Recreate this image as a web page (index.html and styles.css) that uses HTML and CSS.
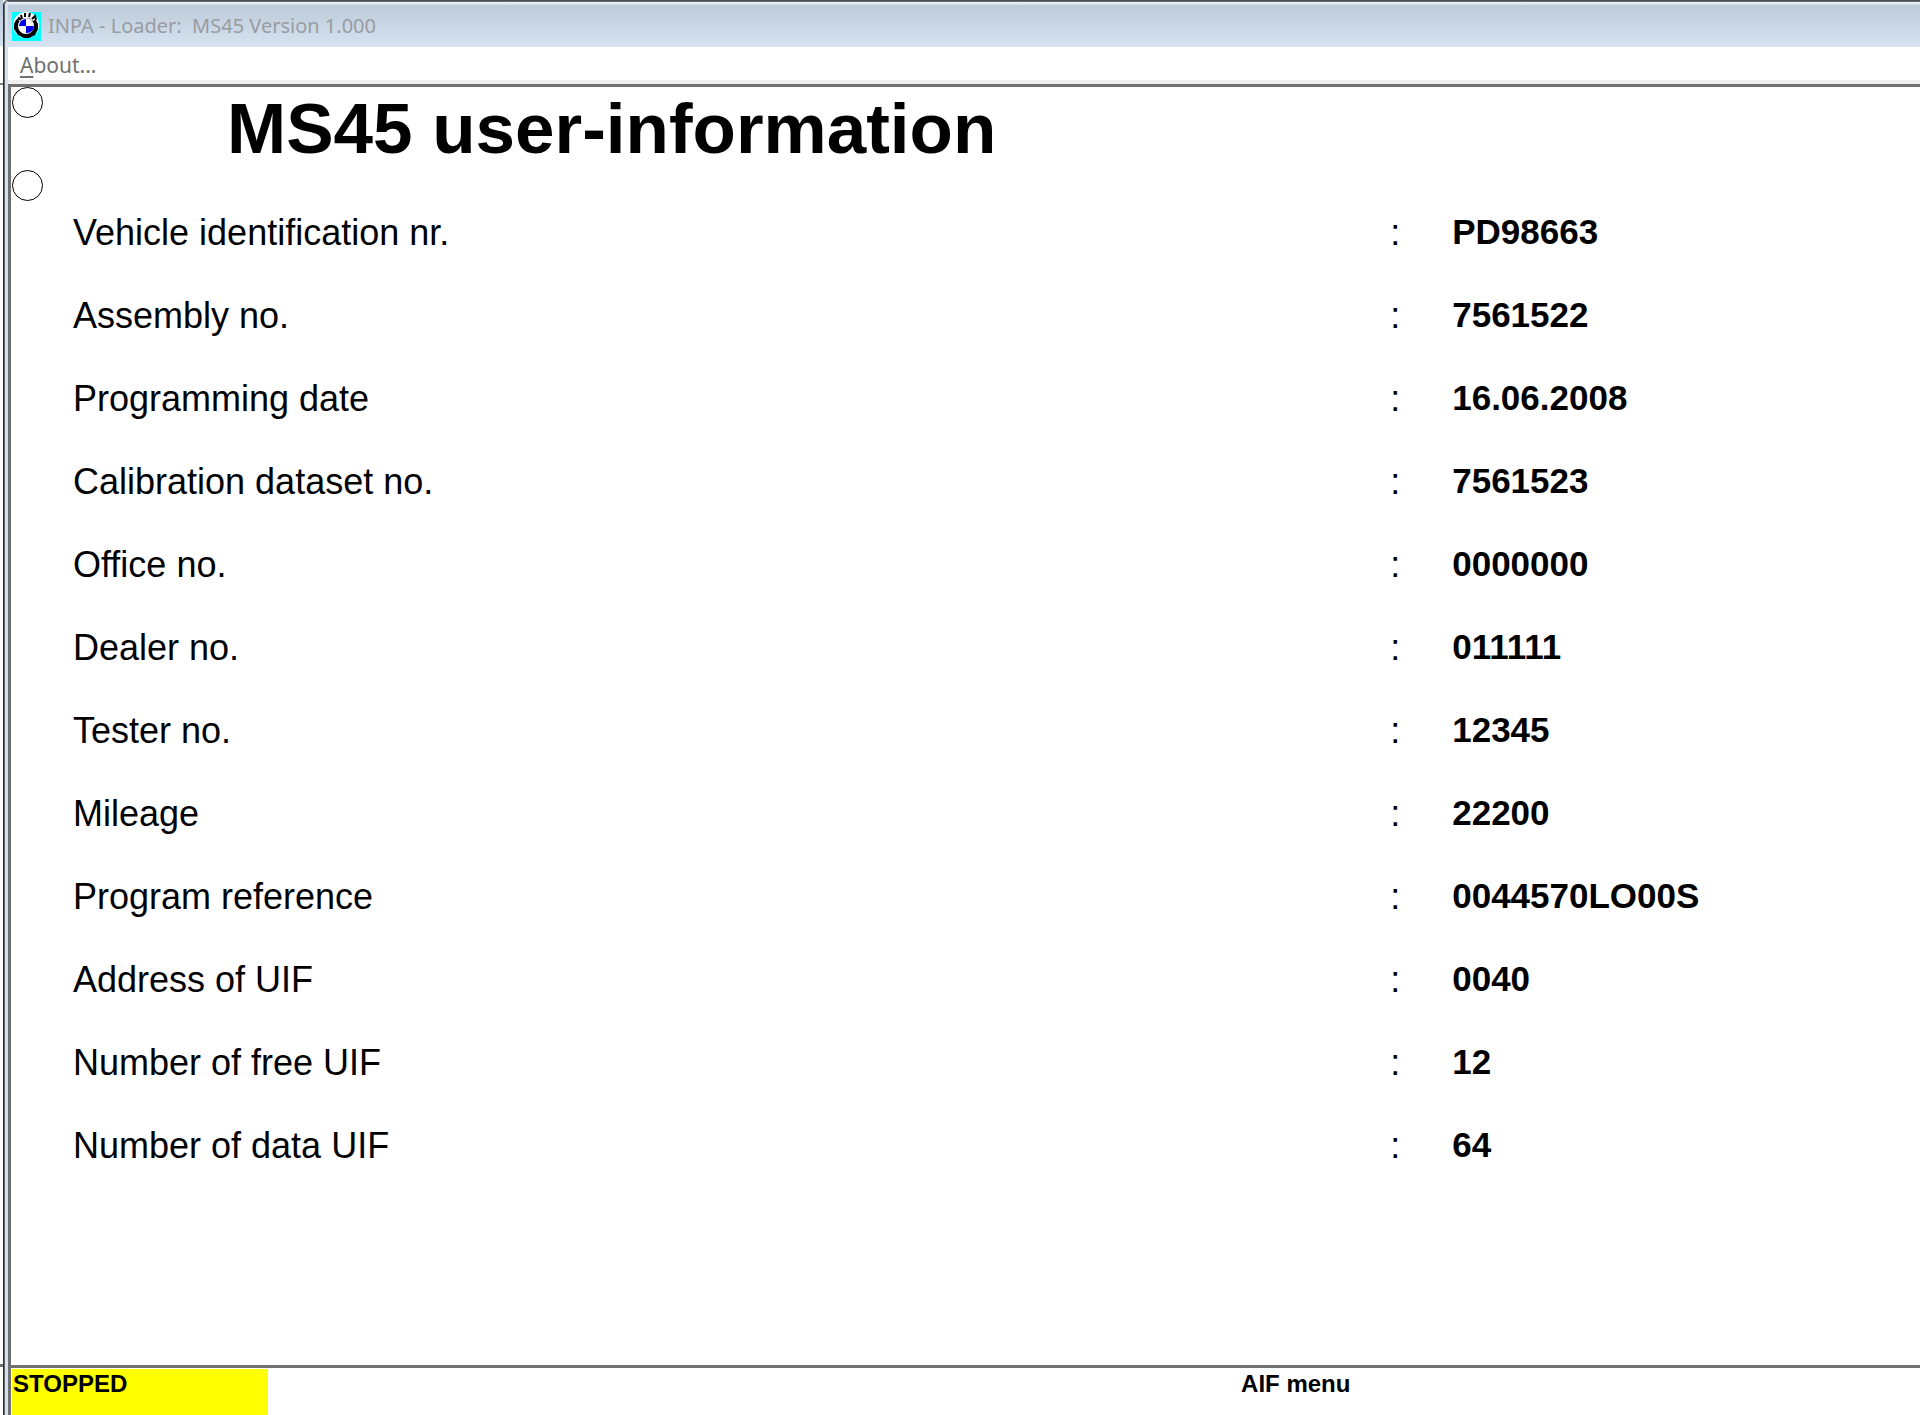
FILE: index.html
```html
<!DOCTYPE html>
<html lang="en">
<head>
<meta charset="utf-8">
<title>INPA - Loader: MS45 Version 1.000</title>
<link rel="stylesheet" href="styles.css">
</head>
<body>
<div class="desktop">
  <div class="behind" aria-hidden="true">
    <div class="behind-title"></div>
    <div class="behind-menu"></div>
    <div class="behind-body"></div>
    <div class="behind-status"></div>
  </div>
  <div class="window">
    <header class="titlebar">
      <svg class="logo" viewBox="0 0 29 29" aria-hidden="true">
        <rect width="29" height="29" fill="#00ffff"/>
        <circle cx="14" cy="13" r="13" fill="#fff"/>
        <path d="M4 8L2 12V17L6 23L12 26H17L23 23L26 17V12L24 8L21 6L8 6Z" fill="#000"/>
        <circle cx="14" cy="14" r="8" fill="#fff"/>
        <path d="M5 8L8 3L13 1H17L21 3L24 7L21 9L17 6H12L8 9Z" fill="#fff"/>
        <path d="M5 9l2-3 2 2M9 3l1 4M13 1v4M17 5l1-4M20 7l3-3 1 4" fill="none" stroke="#000" stroke-width="2"/>
        <path d="M14 14V7A7 7 0 0 0 7 14ZM14 14V21A7 7 0 0 0 22 14Z" fill="#0000f0"/>
      </svg>
      <span class="caption">INPA - Loader:&nbsp; MS45 Version 1.000</span>
    </header>
    <nav class="menubar"><button class="menu-item" type="button"><u>A</u>bout...</button></nav>
    <main class="screen">
      <div class="heading">
        <span class="lamp"></span>
        <h1>MS45 user-information</h1>
      </div>
      <table class="info">
        <colgroup><col class="col-lamp"><col class="col-label"><col class="col-colon"><col></colgroup>
        <tbody>
          <tr><td class="lamp-cell"><span class="lamp"></span></td><th scope="row">Vehicle identification nr.</th><td>:</td><td class="value">PD98663</td></tr>
          <tr><td></td><th scope="row">Assembly no.</th><td>:</td><td class="value">7561522</td></tr>
          <tr><td></td><th scope="row">Programming date</th><td>:</td><td class="value">16.06.2008</td></tr>
          <tr><td></td><th scope="row">Calibration dataset no.</th><td>:</td><td class="value">7561523</td></tr>
          <tr><td></td><th scope="row">Office no.</th><td>:</td><td class="value">0000000</td></tr>
          <tr><td></td><th scope="row">Dealer no.</th><td>:</td><td class="value">011111</td></tr>
          <tr><td></td><th scope="row">Tester no.</th><td>:</td><td class="value">12345</td></tr>
          <tr><td></td><th scope="row">Mileage</th><td>:</td><td class="value">22200</td></tr>
          <tr><td></td><th scope="row">Program reference</th><td>:</td><td class="value">0044570LO00S</td></tr>
          <tr><td></td><th scope="row">Address of UIF</th><td>:</td><td class="value">0040</td></tr>
          <tr><td></td><th scope="row">Number of free UIF</th><td>:</td><td class="value">12</td></tr>
          <tr><td></td><th scope="row">Number of data UIF</th><td>:</td><td class="value">64</td></tr>
        </tbody>
      </table>
    </main>
    <footer class="statusbar">
      <div class="state">STOPPED</div>
      <div class="menu-name">AIF menu</div>
    </footer>
  </div>
</div>
</body>
</html>
```
FILE: styles.css
```css
* { box-sizing: border-box; }

body {
  margin: 0;
  background: #fff;
  color: #000;
  font-family: "Liberation Sans", Arial, sans-serif;
}

.desktop { display: flex; min-height: 100vh; }

/* Sliver of the window behind */
.behind { display: flex; flex-direction: column; width: 3px; }
.behind-title { height: 46px; background: linear-gradient(#b9c8d8, #d3e1ef); }
.behind-menu { height: 39px; border-bottom: 2px solid #808080; }
.behind-body { flex: 1; border-bottom: 3px solid #707070; }
.behind-status { height: 48px; }

.window {
  display: flex;
  flex: 1;
  flex-direction: column;
  border-left: 1px solid #2c2c2c;
  border-top: 1px solid #4c4c50;
  border-top-left-radius: 5px;
  box-shadow: inset 1px 0 #60646a, inset 4px 0 #d5e1ee;
  padding-left: 4px;
}

.titlebar {
  display: flex;
  align-items: center;
  gap: 7px;
  height: 46px;
  padding: 4px 0 0 4px;
  background: linear-gradient(#6a6d72 0 1px, #e4ebf3 1px 3px, #bccad9 4px, #d6e4f1);
}
.logo { flex: none; width: 29px; height: 29px; }
.caption {
  color: #999ca1;
  font: 20px/28px "Noto Sans", "Open Sans", sans-serif;
}

.menubar {
  height: 37px;
  border-bottom: 4px solid #f0f0f0;
  padding: 0 12px;
}
.menu-item {
  border: 0;
  padding: 0;
  background: none;
  color: #707070;
  font: 21px/36px "Noto Sans", "Open Sans", sans-serif;
}
.menu-item u { text-underline-offset: 3px; }

.screen {
  flex: 1;
  border: solid #707070;
  border-width: 3px 0 3px 3px;
}

.heading { display: flex; height: 83px; }
.heading h1 {
  margin: 0;
  padding: 2px 0 0 184px;
  font-size: 71px;
  line-height: 80px;
}

.lamp {
  display: block;
  flex: none;
  width: 31px;
  height: 31px;
  margin-left: 1px;
  border: 1px solid #000;
  border-radius: 50%;
}

.info {
  width: 100%;
  table-layout: fixed;
  border-collapse: collapse;
  font-size: 36px;
  line-height: 40px;
}
.col-lamp { width: 62px; }
.col-label { width: 69%; }
.col-colon { width: 62px; }
.info tr { height: 83px; }
.info th, .info td { padding: 0; text-align: left; vertical-align: bottom; font-weight: 400; }
.info .lamp-cell { vertical-align: top; }
.info .value { padding-bottom: 1px; font-size: 35px; font-weight: 700; }

.statusbar {
  display: flex;
  height: 47px;
  border-left: 3px solid #707070;
  padding: 1px 0 0 1px;
  font-size: 24px;
  font-weight: 700;
  line-height: 30px;
}
.state { width: 256px; padding-left: 1px; background: #ff0; }
.menu-name { padding-left: 51%; }
```
